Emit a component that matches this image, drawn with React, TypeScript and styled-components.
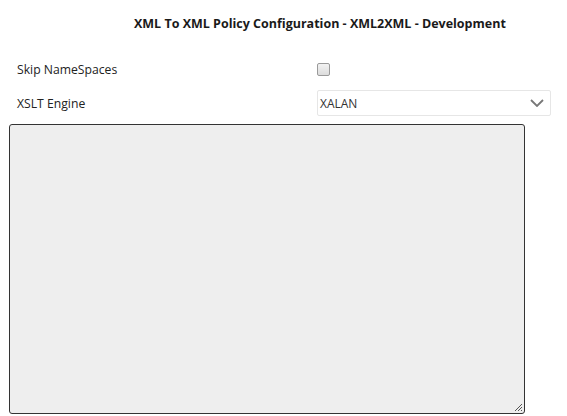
import React from "react";
import styled, { createGlobalStyle } from "styled-components";

const Global = createGlobalStyle`
  html, body { margin: 0; padding: 0; background: #ffffff; }
  body { font-family: "Open Sans", "Noto Sans", Arial, sans-serif; color: #222; }
`;

const Page = styled.div`
  width: 567px;
  height: 416px;
  box-sizing: border-box;
  padding: 14px 0 0 0;
  display: flex;
  flex-direction: column;
`;

const Title = styled.h1`
  margin: 0;
  padding-left: 134px;
  font-size: 12.5px;
  font-weight: 700;
  line-height: 20px;
  color: #1a1a1a;
  white-space: nowrap;
`;

const Form = styled.div`
  margin-top: 24px;
  display: flex;
  flex-direction: column;
  gap: 6px;
`;

const Row = styled.div<{ $h: number }>`
  display: grid;
  grid-template-columns: 300px 234px;
  padding-left: 17px;
  height: ${(p) => p.$h}px;
  align-items: center;
`;

const Label = styled.label`
  font-size: 12.2px;
  color: #222;
`;

const Checkbox = styled.span`
  width: 11px;
  height: 11px;
  border: 1px solid #9a9a9a;
  border-radius: 2px;
  background: linear-gradient(#f2f2f2, #dcdcdc);
`;

const Select = styled.div`
  box-sizing: border-box;
  height: 26px;
  border: 1px solid #e6e6e6;
  border-radius: 2px;
  display: flex;
  align-items: center;
  justify-content: space-between;
  padding: 0 6px 0 2px;
  font-size: 12px;
  color: #333;
  background: #fff;
`;

const TextArea = styled.div`
  margin: 4px 0 0 9px;
  width: 516px;
  height: 290px;
  box-sizing: border-box;
  border: 1px solid #333;
  border-radius: 3px;
  background: #eeeeee;
  position: relative;
`;

const Grip = styled.svg`
  position: absolute;
  right: 1px;
  bottom: 1px;
`;

export default function App() {
  return (
    <Page>
      <Global />
      <Title>XML To XML Policy Configuration - XML2XML - Development</Title>
      <Form>
        <Row $h={22}>
          <Label>Skip NameSpaces</Label>
          <Checkbox />
        </Row>
        <Row $h={34}>
          <Label>XSLT Engine</Label>
          <Select>
            <span>XALAN</span>
            <svg width="14" height="8" viewBox="0 0 14 8">
              <path d="M1 1 L7 7 L13 1" fill="none" stroke="#777" strokeWidth="1.8" />
            </svg>
          </Select>
        </Row>
      </Form>
      <TextArea>
        <Grip width="9" height="9" viewBox="0 0 9 9">
          <path d="M8 1 L1 8 M8 4 L4 8 M8 7 L7 8" stroke="#555" strokeWidth="1" />
        </Grip>
      </TextArea>
    </Page>
  );
}
